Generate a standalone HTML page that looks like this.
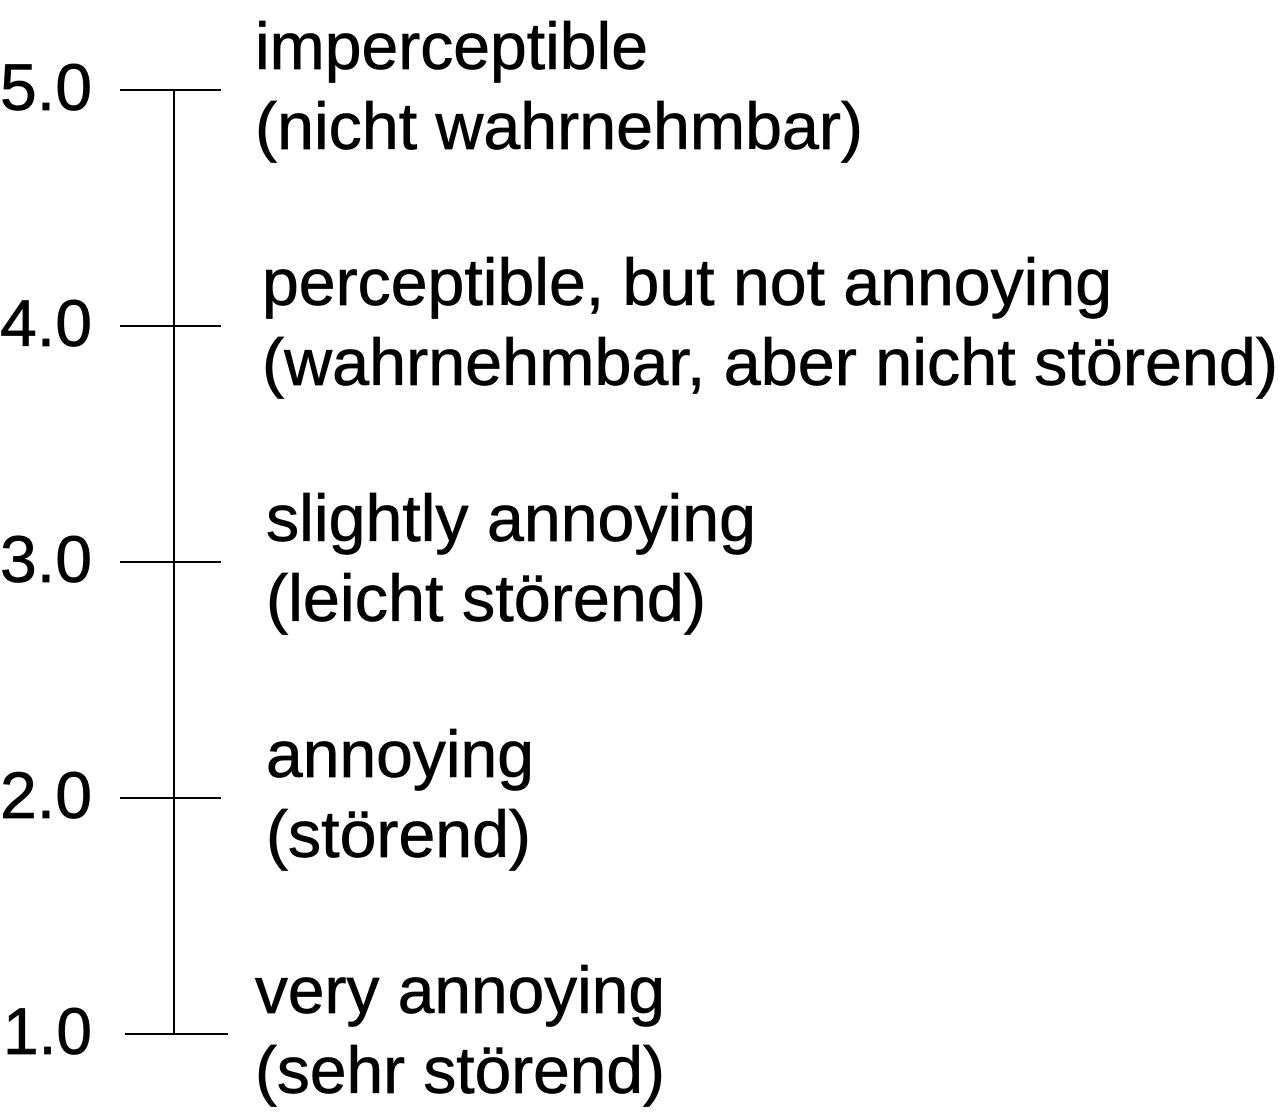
<!DOCTYPE html>
<html><head><style>html,body{margin:0;padding:0;background:#fff}svg{display:block}</style></head>
<body>
<svg width="1281" height="1113" xmlns="http://www.w3.org/2000/svg" font-family="Liberation Sans, Arial, sans-serif" font-size="66" fill="#000">
<g stroke="#000" stroke-width="2">
<line x1="174" y1="90" x2="174" y2="1034"/>
<line x1="120" y1="90" x2="221" y2="90"/>
<line x1="120" y1="326" x2="221" y2="326"/>
<line x1="120" y1="562" x2="221" y2="562"/>
<line x1="120" y1="798" x2="221" y2="798"/>
<line x1="125" y1="1034" x2="228" y2="1034"/>
</g>
<g stroke="#000" stroke-width="0.7">
<text x="0" y="110" textLength="92" lengthAdjust="spacingAndGlyphs">5.0</text>
<text x="0" y="346" textLength="92" lengthAdjust="spacingAndGlyphs">4.0</text>
<text x="0" y="582" textLength="92" lengthAdjust="spacingAndGlyphs">3.0</text>
<text x="0" y="818" textLength="92" lengthAdjust="spacingAndGlyphs">2.0</text>
<text x="3" y="1054" textLength="89" lengthAdjust="spacingAndGlyphs">1.0</text>

<text x="255" y="69" textLength="393" lengthAdjust="spacingAndGlyphs">imperceptible</text>
<text x="255" y="149" textLength="608" lengthAdjust="spacingAndGlyphs">(nicht wahrnehmbar)</text>
<text x="262" y="305" textLength="850" lengthAdjust="spacingAndGlyphs">perceptible, but not annoying</text>
<text x="262" y="385" textLength="1016" lengthAdjust="spacingAndGlyphs">(wahrnehmbar, aber nicht störend)</text>
<text x="266" y="541" textLength="490" lengthAdjust="spacingAndGlyphs">slightly annoying</text>
<text x="266" y="621" textLength="440" lengthAdjust="spacingAndGlyphs">(leicht störend)</text>
<text x="266" y="777" textLength="268" lengthAdjust="spacingAndGlyphs">annoying</text>
<text x="266" y="857" textLength="265" lengthAdjust="spacingAndGlyphs">(störend)</text>
<text x="255" y="1013" textLength="410" lengthAdjust="spacingAndGlyphs">very annoying</text>
<text x="255" y="1093" textLength="410" lengthAdjust="spacingAndGlyphs">(sehr störend)</text>
</g>
</svg>
</body></html>
